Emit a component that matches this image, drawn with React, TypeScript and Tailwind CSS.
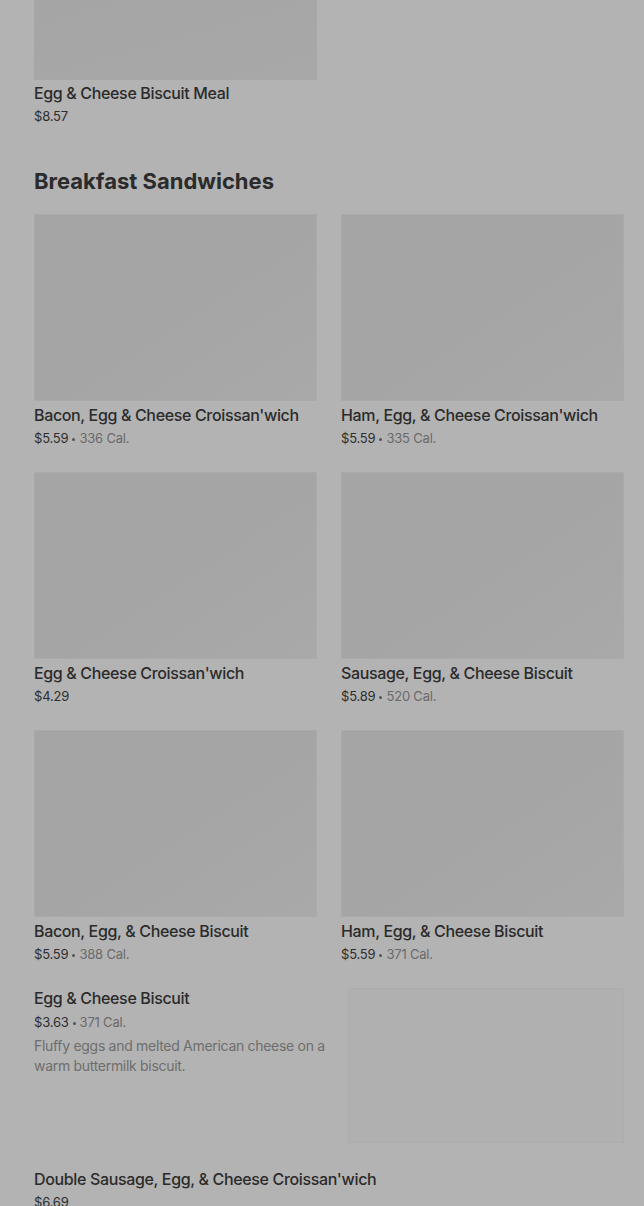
import React from "react";

type Item = { name: string; price: string; cal?: string };

const grid: Item[] = [
  { name: "Bacon, Egg & Cheese Croissan'wich", price: "$5.59", cal: "336 Cal." },
  { name: "Ham, Egg, & Cheese Croissan'wich", price: "$5.59", cal: "335 Cal." },
  { name: "Egg & Cheese Croissan'wich", price: "$4.29" },
  { name: "Sausage, Egg, & Cheese Biscuit", price: "$5.89", cal: "520 Cal." },
  { name: "Bacon, Egg, & Cheese Biscuit", price: "$5.59", cal: "388 Cal." },
  { name: "Ham, Egg, & Cheese Biscuit", price: "$5.59", cal: "371 Cal." },
];

function Price({ price, cal }: { price: string; cal?: string }) {
  return (
    <div className="h-[20px] text-[13px] leading-[20px] text-[#2e2e2e] whitespace-nowrap tracking-[-0.2px]">
      {price}
      {cal && (
        <span className="text-[#6a6a6a]">
          <span className="inline-block w-[3px] h-[3px] rounded-full bg-[#555555] align-middle mx-[4px]" />
          {cal}
        </span>
      )}
    </div>
  );
}

const titleCls = "text-[16px] leading-[20px] font-medium text-[#2b2b2b] tracking-[-0.35px]";

function Card({ item }: { item: Item }) {
  return (
    <div className="flex flex-col">
      <div className="h-[187px] bg-gradient-to-br from-[#a5a5a5] via-[#a5a5a5] to-[#a9a9a9] border border-[#aaaaaa]" />
      <div className={"mt-[4px] " + titleCls}>{item.name}</div>
      <div className="mt-[3px]">
        <Price price={item.price} cal={item.cal} />
      </div>
    </div>
  );
}

export default function App() {
  return (
    <div
      className="h-[1206px] overflow-hidden bg-[#b3b3b3] pl-[34px] pr-[20px]"
      style={{ fontFamily: "Inter, 'Noto Sans', sans-serif" }}
    >
      <div className="w-[283px]">
        <div className="h-[80px] bg-gradient-to-br from-[#a5a5a5] to-[#a8a8a8]" />
        <div className={"mt-[3px] " + titleCls}>Egg &amp; Cheese Biscuit Meal</div>
        <div className="mt-[3px]">
          <Price price="$8.57" />
        </div>
      </div>

      <h2 className="mt-[39px] text-[22px] leading-[32px] font-bold tracking-[0px] text-[#2b2b2b]">
        Breakfast Sandwiches
      </h2>

      <div className="mt-[17px] grid grid-cols-[283px_283px] gap-x-[24px] gap-y-[24px]">
        {grid.map((it) => (
          <Card key={it.name} item={it} />
        ))}
      </div>

      <div className="mt-[24px] flex justify-between">
        <div className="w-[300px]">
          <div className={titleCls}>Egg &amp; Cheese Biscuit</div>
          <div className="mt-[4px]">
            <Price price="$3.63" cal="371 Cal." />
          </div>
          <div className="mt-[4px] text-[14px] leading-[20px] text-[#6e6e6e] tracking-[-0.3px]">
            Fluffy eggs and melted American cheese on a warm buttermilk biscuit.
          </div>
        </div>
        <div className="w-[276px] h-[155px] bg-[#b0b0b0] border border-[#adadad]" />
      </div>

      <div className="mt-[26px]">
        <div className={titleCls}>Double Sausage, Egg, &amp; Cheese Croissan'wich</div>
        <div className="mt-[3px]">
          <Price price="$6.69" />
        </div>
      </div>
    </div>
  );
}
